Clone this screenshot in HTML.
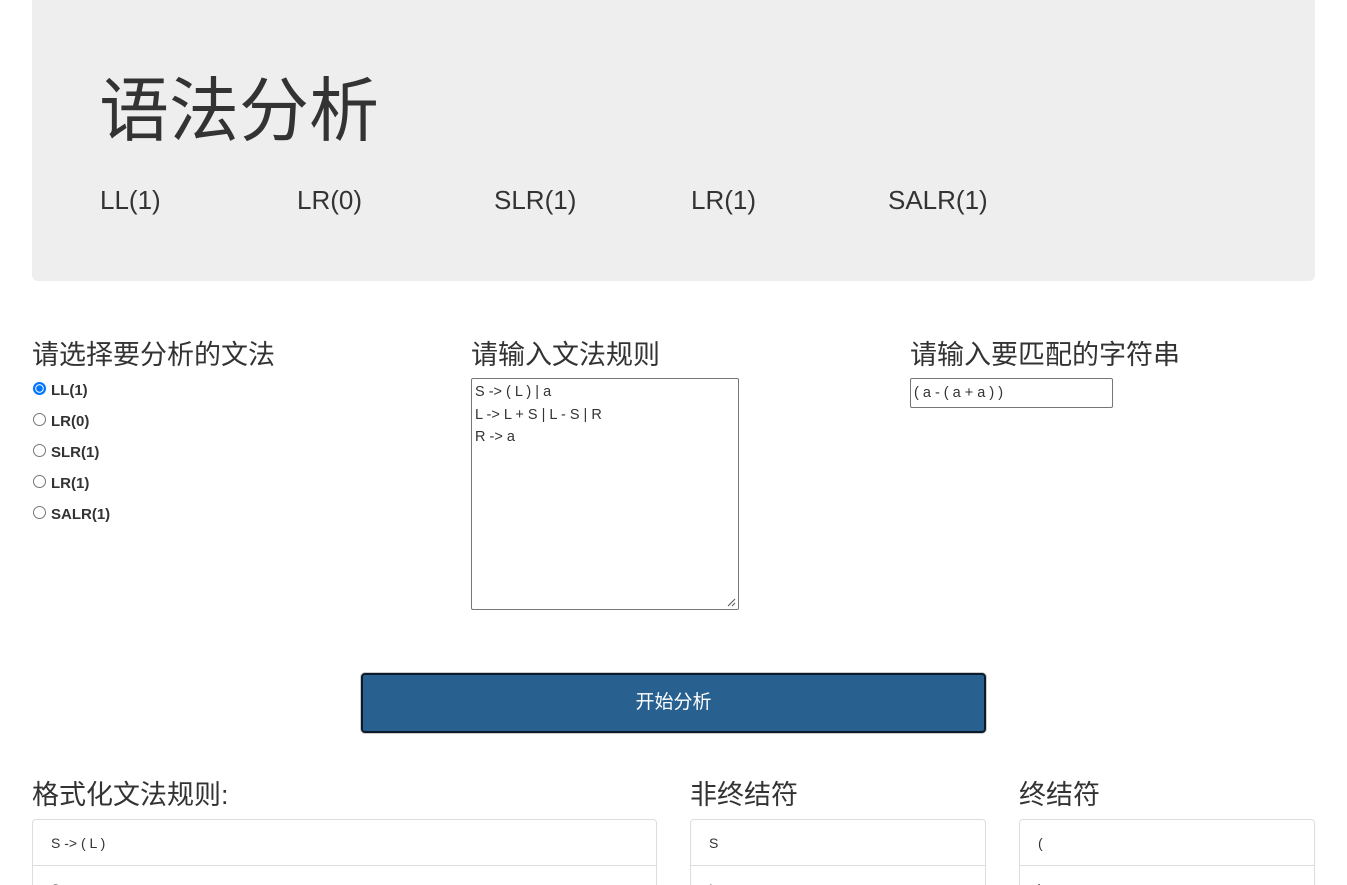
<!DOCTYPE html>
<html><head><meta charset="utf-8"><style>
*{box-sizing:border-box;margin:0;padding:0}
html,body{width:1347px;height:885px;overflow:hidden}
body{background:#fff;font-family:"Liberation Sans","Noto Sans CJK SC",sans-serif;color:#333;position:relative}
.jum{position:absolute;left:32px;top:-6px;width:1283px;height:287px;background:#eee;border-radius:6px}
.h1{position:absolute;left:99px;top:55px;font-size:70px;font-weight:400;color:#333}
.nav{position:absolute;top:185px;font-size:26px;color:#333}
.h3{position:absolute;font-size:27px;color:#333}
.radio{position:absolute;left:33px;font-size:15px;font-weight:bold;display:flex;align-items:center}
.radio i{display:inline-block;width:13px;height:13px;border:1px solid #767676;border-radius:50%;margin-right:5px;background:#fff;position:relative;top:-2px}
.radio i.on{border:1px solid #0075ff;background:radial-gradient(circle,#0075ff 0 3px,#fff 3.5px 4px,#0075ff 4.5px)}
.ta{position:absolute;left:471px;top:378px;width:268px;height:232px;border:1px solid #767676;border-radius:2px;font-size:14.5px;line-height:22.5px;padding:2px 3px}
.inp{position:absolute;left:910px;top:378px;width:203px;height:30px;border:1px solid #767676;border-radius:2px;font-size:14.5px;line-height:28px;padding-left:3px}
.btn{position:absolute;left:361px;top:673px;width:625px;height:60px;background:#286090;border:2px solid #0b1b2b;border-radius:4px;box-shadow:0 0 0 1px #ccc;color:#fff;font-size:19px;text-align:center;line-height:56px}
.list{position:absolute;top:819px;border:1px solid #ddd;border-radius:4px;overflow:hidden}
.list div{height:46px;border-bottom:1px solid #ddd;padding-left:18px;line-height:46px;font-size:14px}
</style></head><body>
<div class="jum"></div>
<div class="h1">语法分析</div>
<div class="nav" style="left:100px">LL(1)</div>
<div class="nav" style="left:297px">LR(0)</div>
<div class="nav" style="left:494px">SLR(1)</div>
<div class="nav" style="left:691px">LR(1)</div>
<div class="nav" style="left:888px">SALR(1)</div>

<div class="h3" style="left:32px;top:333px">请选择要分析的文法</div>
<div class="h3" style="left:471px;top:333px">请输入文法规则</div>
<div class="h3" style="left:910px;top:333px">请输入要匹配的字符串</div>

<div class="radio" style="top:382px"><i class="on"></i>LL(1)</div>
<div class="radio" style="top:413px"><i></i>LR(0)</div>
<div class="radio" style="top:444px"><i></i>SLR(1)</div>
<div class="radio" style="top:475px"><i></i>LR(1)</div>
<div class="radio" style="top:506px"><i></i>SALR(1)</div>

<div class="ta">S -&gt; ( L ) | a<br>L -&gt; L + S | L - S | R<br>R -&gt; a
<svg style="position:absolute;right:2px;bottom:2px" width="10" height="10"><path d="M9 2L2 9M9 6L6 9" stroke="#555" stroke-width="1"/></svg></div>
<div class="inp">( a - ( a + a ) )</div>

<div class="btn">开始分析</div>

<div class="h3" style="left:32px;top:773px">格式化文法规则:</div>
<div class="h3" style="left:690px;top:773px">非终结符</div>
<div class="h3" style="left:1019px;top:773px">终结符</div>

<div class="list" style="left:32px;width:625px"><div>S -&gt; ( L )</div><div>S -&gt; a</div></div>
<div class="list" style="left:690px;width:296px"><div>S</div><div>L</div></div>
<div class="list" style="left:1019px;width:296px"><div>(</div><div>)</div></div>
</body></html>
